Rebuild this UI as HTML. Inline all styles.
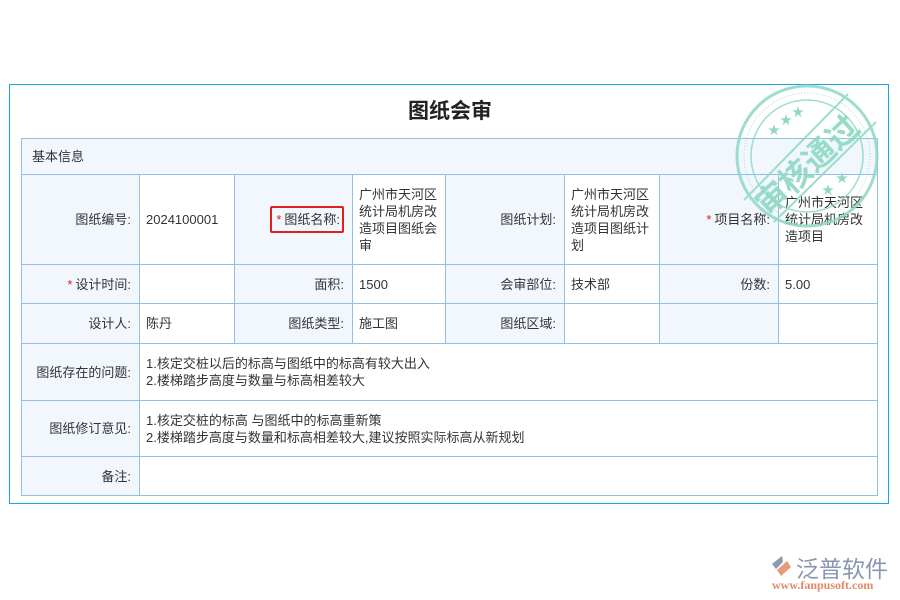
<!DOCTYPE html>
<html><head><meta charset="utf-8">
<style>
*{margin:0;padding:0;box-sizing:border-box}
body{width:900px;height:600px;background:#fff;position:relative;overflow:hidden;font-family:"Liberation Sans","Noto Sans CJK SC",sans-serif;font-size:13px;color:#333}
.outer{position:absolute;left:9px;top:84px;width:880px;height:420px;border:1px solid #1aa6e0}
h1{position:absolute;left:0;top:95px;width:900px;text-align:center;font-size:21px;font-weight:bold;color:#222}
.c{position:absolute;border-right:1px solid #8fc0e6;border-bottom:1px solid #8fc0e6;display:flex;align-items:center;padding:0 6px;line-height:17px}
.l{background:#f1f7fd;justify-content:flex-end;padding-right:8px}
.v{background:#fff}
.s{color:#e0201a;margin-right:3px}
</style></head><body>
<div class="outer"></div>
<h1>图纸会审</h1>
<div class="c l" style="left:21px;top:138px;width:857px;height:37px;justify-content:flex-start;padding-left:10px;border-left:1px solid #8fc0e6;border-top:1px solid #8fc0e6">基本信息</div>

<div class="c l" style="left:21px;top:175px;width:119px;height:90px;border-left:1px solid #8fc0e6">图纸编号:</div>
<div class="c v" style="left:140px;top:175px;width:95px;height:90px">2024100001</div>
<div class="c l" style="left:235px;top:175px;width:118px;height:90px"><span style="border:2px solid #e0201a;border-radius:2px;padding:3px 2px 3px 4px"><span class="s">*</span>图纸名称:</span></div>
<div class="c v" style="left:353px;top:175px;width:93px;height:90px">广州市天河区统计局机房改造项目图纸会审</div>
<div class="c l" style="left:446px;top:175px;width:119px;height:90px">图纸计划:</div>
<div class="c v" style="left:565px;top:175px;width:95px;height:90px">广州市天河区统计局机房改造项目图纸计划</div>
<div class="c l" style="left:660px;top:175px;width:119px;height:90px"><span class="s">*</span>项目名称:</div>
<div class="c v" style="left:779px;top:175px;width:99px;height:90px">广州市天河区统计局机房改造项目</div>

<div class="c l" style="left:21px;top:265px;width:119px;height:39px;border-left:1px solid #8fc0e6"><span class="s">*</span>设计时间:</div>
<div class="c v" style="left:140px;top:265px;width:95px;height:39px"></div>
<div class="c l" style="left:235px;top:265px;width:118px;height:39px">面积:</div>
<div class="c v" style="left:353px;top:265px;width:93px;height:39px">1500</div>
<div class="c l" style="left:446px;top:265px;width:119px;height:39px">会审部位:</div>
<div class="c v" style="left:565px;top:265px;width:95px;height:39px">技术部</div>
<div class="c l" style="left:660px;top:265px;width:119px;height:39px">份数:</div>
<div class="c v" style="left:779px;top:265px;width:99px;height:39px">5.00</div>

<div class="c l" style="left:21px;top:304px;width:119px;height:40px;border-left:1px solid #8fc0e6">设计人:</div>
<div class="c v" style="left:140px;top:304px;width:95px;height:40px">陈丹</div>
<div class="c l" style="left:235px;top:304px;width:118px;height:40px">图纸类型:</div>
<div class="c v" style="left:353px;top:304px;width:93px;height:40px">施工图</div>
<div class="c l" style="left:446px;top:304px;width:119px;height:40px">图纸区域:</div>
<div class="c v" style="left:565px;top:304px;width:95px;height:40px"></div>
<div class="c l" style="left:660px;top:304px;width:119px;height:40px"></div>
<div class="c v" style="left:779px;top:304px;width:99px;height:40px"></div>

<div class="c l" style="left:21px;top:344px;width:119px;height:57px;border-left:1px solid #8fc0e6">图纸存在的问题:</div>
<div class="c v" style="left:140px;top:344px;width:738px;height:57px">1.核定交桩以后的标高与图纸中的标高有较大出入<br>2.楼梯踏步高度与数量与标高相差较大</div>
<div class="c l" style="left:21px;top:401px;width:119px;height:56px;border-left:1px solid #8fc0e6">图纸修订意见:</div>
<div class="c v" style="left:140px;top:401px;width:738px;height:56px">1.核定交桩的标高 与图纸中的标高重新策<br>2.楼梯踏步高度与数量和标高相差较大,建议按照实际标高从新规划</div>
<div class="c l" style="left:21px;top:457px;width:119px;height:39px;border-left:1px solid #8fc0e6">备注:</div>
<div class="c v" style="left:140px;top:457px;width:738px;height:39px"></div>

<svg style="position:absolute;left:730px;top:82px" width="155" height="150" viewBox="0 0 155 150">
<g fill="none" stroke="#8ed8c4" opacity="0.85">
<circle cx="77" cy="74" r="70" stroke-width="3"/>
<circle cx="77" cy="74" r="63" stroke-width="1" stroke-dasharray="1 2"/>
<circle cx="77" cy="74" r="56" stroke-width="1.5"/>
<line x1="14" y1="118" x2="118" y2="12" stroke-width="2"/>
<line x1="44" y1="140" x2="146" y2="40" stroke-width="2"/>
</g>
<g fill="#8ed8c4" font-size="12">
<text x="38" y="52">★</text><text x="50" y="42">★</text><text x="62" y="34">★</text>
<text x="92" y="112">★</text><text x="106" y="100">★</text>
</g>
<text x="77" y="88" text-anchor="middle" transform="rotate(-43 77 80) translate(-2 6)" font-family="Liberation Sans,Noto Sans CJK SC,sans-serif" font-size="32" font-weight="bold" fill="#8ed8c4" opacity="0.9">审核通过</text>
</svg>

<div style="position:absolute;left:769px;top:554px;width:26px;height:24px">
<svg width="26" height="24"><path d="M3 10 L13 2 L14 8 L7 15 Z" fill="#8a9bb4"/><path d="M8 16 L18 7 L22 13 L12 22 Z" fill="#e99a7a"/></svg></div>
<div style="position:absolute;left:796px;top:550px;font-size:23px;color:#8a96b0;letter-spacing:0px">泛普软件</div>
<div style="position:absolute;left:772px;top:578px;font-size:12px;color:#e08a6a;font-family:'Liberation Serif',serif;font-weight:bold">www.fanpusoft.com</div>
</body></html>
